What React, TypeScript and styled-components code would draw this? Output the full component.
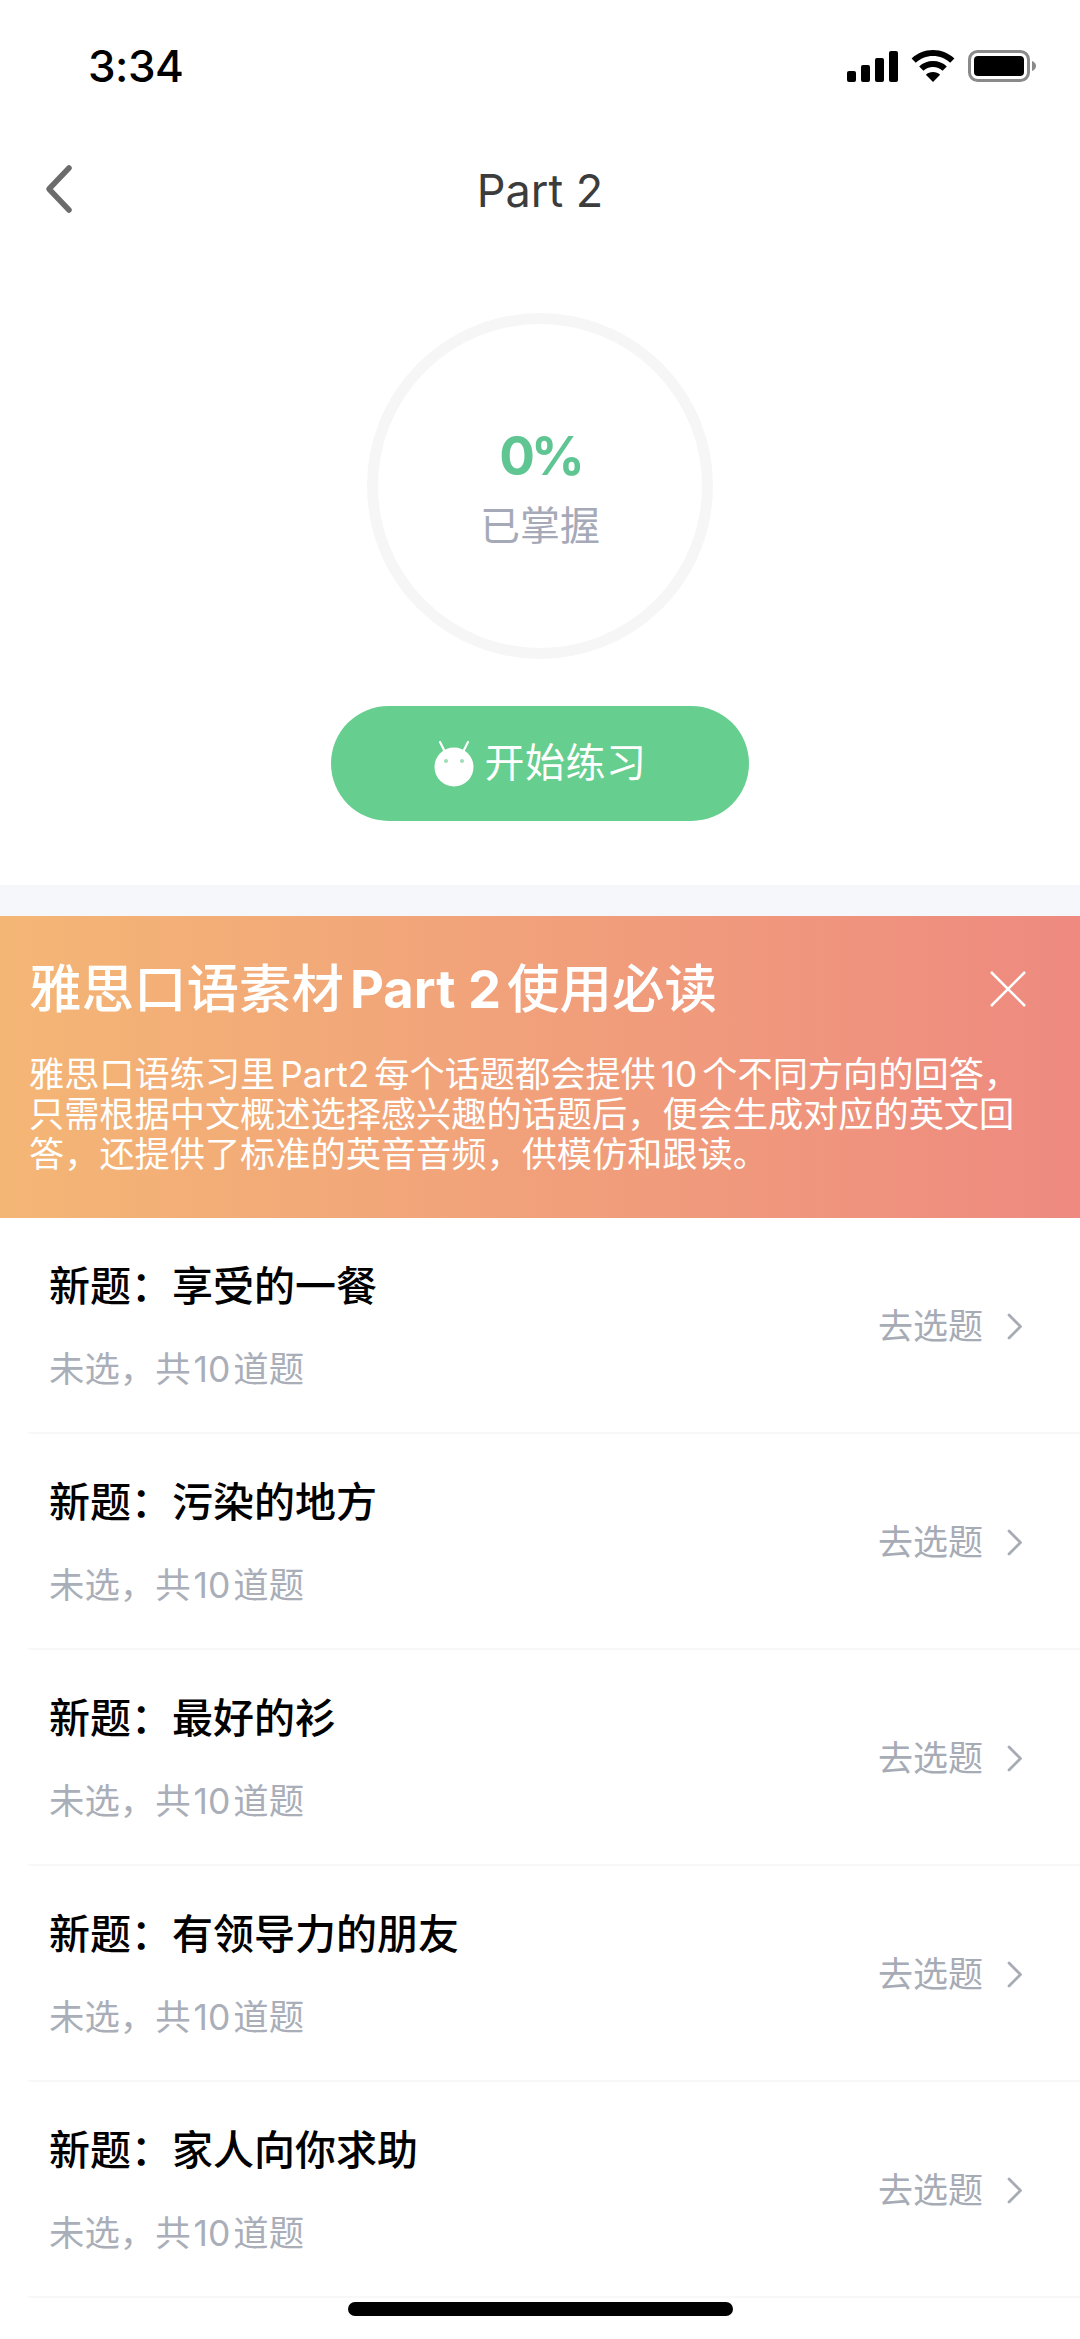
import React from "react";
import styled, { createGlobalStyle } from "styled-components";

const FONT = `Inter, "Noto Sans CJK SC", "Noto Sans", sans-serif`;
const COMMA = "\uFF0C";
const COLON = "\uFF1A";
const STOP = "\u3002";

const Global = createGlobalStyle`
  html, body { margin: 0; padding: 0; background: #fff; }
  * { box-sizing: border-box; }
`;

const Page = styled.div`
  position: relative;
  width: 1080px;
  height: 2339px;
  overflow: hidden;
  background: #fff;
  font-family: ${FONT};
  display: flex;
  flex-direction: column;
`;

const StatusBar = styled.div`
  height: 130px;
  padding: 40px 44px 0 88px;
  display: flex;
  justify-content: space-between;
  align-items: flex-start;
`;

const Time = styled.div`
  font-size: 44px;
  line-height: 52px;
  font-weight: 500;
  color: #000;
  letter-spacing: -0.5px;
`;

const StatusIcons = styled.div`
  display: flex;
  align-items: center;
  gap: 13px;
  height: 52px;
`;

const Nav = styled.div`
  position: relative;
  height: 122px;
  display: flex;
  align-items: center;
  justify-content: center;
`;

const BackButton = styled.div`
  position: absolute;
  left: 44px;
  top: 34px;
  width: 32px;
  height: 50px;
`;

const NavTitle = styled.div`
  font-size: 45px;
  line-height: 60px;
  color: #3c3c3c;
  font-weight: 400;
`;

const Hero = styled.div`
  padding-top: 61px;
  padding-bottom: 64px;
  display: flex;
  flex-direction: column;
  align-items: center;
  gap: 47px;
`;

const Ring = styled.div`
  width: 346px;
  height: 346px;
  border-radius: 50%;
  border: 11px solid #f6f6f7;
  display: flex;
  flex-direction: column;
  align-items: center;
  padding-top: 100px;
`;

const Percent = styled.div`
  font-size: 53px;
  line-height: 64px;
  font-weight: 700;
  letter-spacing: -4px;
  color: #5fc592;
`;

const Mastered = styled.div`
  font-size: 40px;
  line-height: 56px;
  color: #a6aab8;
  margin-top: 10px;
`;

const StartButton = styled.div`
  width: 418px;
  height: 115px;
  border-radius: 58px;
  background: #66ce8e;
  display: flex;
  align-items: center;
  justify-content: center;
  gap: 11px;
  color: #fff;
  font-size: 40px;
  line-height: 56px;
`;

const ButtonLabel = styled.span`
  position: relative;
  top: -1px;
  letter-spacing: 0.5px;
`;

const Band = styled.div`
  height: 31px;
  background: #f5f7fa;
`;

const Banner = styled.div`
  height: 302px;
  padding: 37px 54px 0 29px;
  background: linear-gradient(90deg, #f4b675 0%, #ee8a80 100%);
  color: #fff;
`;

const BannerHead = styled.div`
  display: flex;
  justify-content: space-between;
  align-items: center;
  height: 72px;
`;

const BannerTitle = styled.div`
  font-size: 52.5px;
  line-height: 72px;
  font-weight: 500;
  white-space: nowrap;
`;

const BannerLatin = styled.span`
  font-weight: 700;
  margin: 0 6px;
`;

const BannerBody = styled.div`
  margin-top: 29px;
  font-size: 35.2px;
  line-height: 40px;
  white-space: nowrap;
`;

const BodyLatin = styled.span`
  margin: 0 5px;
`;

const Row = styled.div`
  position: relative;
  height: 216px;
  padding: 0 57px 0 49px;
  display: flex;
  justify-content: space-between;
  align-items: center;
  &::after {
    content: "";
    position: absolute;
    left: 28px;
    right: 0;
    bottom: 0;
    height: 2px;
    background: #f8f8f9;
  }
`;

const RowText = styled.div`
  display: flex;
  flex-direction: column;
  gap: 32px;
`;

const RowTitle = styled.div`
  font-size: 41px;
  line-height: 56px;
  font-weight: 500;
  color: #000;
`;

const RowSub = styled.div`
  font-size: 35.4px;
  line-height: 48px;
  color: #a9aeb8;
`;

const Latin = styled.span`
  margin: 0 3px;
`;

const RowAction = styled.div`
  display: flex;
  align-items: center;
  gap: 24px;
  font-size: 35px;
  line-height: 48px;
  color: #a6abb6;
`;

const HomeBar = styled.div`
  position: absolute;
  left: 348px;
  bottom: 23px;
  width: 385px;
  height: 14px;
  border-radius: 7px;
  background: #000;
`;

const Signal = () => (
  <svg width="51" height="31" viewBox="0 0 51 31" fill="#000">
    <rect x="0" y="20" width="9" height="11" rx="2" />
    <rect x="14" y="14" width="9" height="17" rx="2" />
    <rect x="28" y="7" width="9" height="24" rx="2" />
    <rect x="42" y="0" width="9" height="31" rx="2" />
  </svg>
);

const Wifi = () => (
  <svg width="44" height="32" viewBox="0 0 44 32" fill="#000">
    <path d="M22 0C13.6 0 6.2 3.2 0.6 8.4l4.2 4.4C9.3 8.6 15.3 6 22 6s12.7 2.600 17.2 6.800l4.200-4.400C37.800 3.200 30.400 0 22 0z" />
    <path d="M22 11c-5.4 0-10.200 2-13.800 5.400l4.200 4.400C14.900 18.400 18.200 17 22 17s7.100 1.400 9.600 3.800l4.200-4.400C32.200 13 27.400 11 22 11z" />
    <path d="M22 22c-2.800 0-5.300 1-7.100 2.800L22 32l7.100-7.200C27.300 23 24.800 22 22 22z" />
  </svg>
);

const Battery = () => (
  <svg width="68" height="32" viewBox="0 0 68 32">
    <rect x="1.5" y="1.5" width="59" height="29" rx="8" fill="none" stroke="#8a8a8a" strokeWidth="3" />
    <rect x="6" y="6" width="50" height="20" rx="4" fill="#000" />
    <path d="M64 11c2.400.8 4 2.700 4 5s-1.600 4.200-4 5z" fill="#8a8a8a" />
  </svg>
);

const Chevron = styled.svg`
  display: block;
`;

const Robot = () => (
  <svg width="40" height="46" viewBox="0 0 40 46">
    <path d="M10 9L6 1M30 9l4-8" stroke="#fff" strokeWidth="2.200" strokeLinecap="round" />
    <circle cx="20" cy="26" r="19.500" fill="#fff" />
    <circle cx="12" cy="20" r="2" fill="#9fdcb8" />
    <circle cx="28" cy="20" r="2" fill="#9fdcb8" />
  </svg>
);

const topics = ["享受的一餐", "污染的地方", "最好的衫", "有领导力的朋友", "家人向你求助"];

export default function App() {
  return (
    <Page>
      <Global />
      <StatusBar>
        <Time>3:34</Time>
        <StatusIcons>
          <Signal />
          <Wifi />
          <Battery />
        </StatusIcons>
      </StatusBar>
      <Nav>
        <BackButton>
          <Chevron width="32" height="50" viewBox="0 0 32 50" fill="none">
            <path d="M25 4L5 25l20 21" stroke="#6b6b6b" strokeWidth="5.500" strokeLinecap="round" strokeLinejoin="round" />
          </Chevron>
        </BackButton>
        <NavTitle>Part 2</NavTitle>
      </Nav>
      <Hero>
        <Ring>
          <Percent>0%</Percent>
          <Mastered>已掌握</Mastered>
        </Ring>
        <StartButton>
          <Robot />
          <ButtonLabel>开始练习</ButtonLabel>
        </StartButton>
      </Hero>
      <Band />
      <Banner>
        <BannerHead>
          <BannerTitle>雅思口语素材<BannerLatin>Part 2</BannerLatin>使用必读</BannerTitle>
          <svg width="36" height="36" viewBox="0 0 36 36" fill="none">
            <path d="M1 1l34 34M35 1L1 35" stroke="#fff" strokeWidth="2.500" />
          </svg>
        </BannerHead>
        <BannerBody>
          雅思口语练习里<BodyLatin>Part2</BodyLatin>每个话题都会提供<BodyLatin>10</BodyLatin>个不同方向的回答{COMMA}
          <br />
          只需根据中文概述选择感兴趣的话题后{COMMA}便会生成对应的英文回
          <br />
          答{COMMA}还提供了标准的英音音频{COMMA}供模仿和跟读{STOP}
        </BannerBody>
      </Banner>
      {topics.map((t) => (
        <Row key={t}>
          <RowText>
            <RowTitle>新题{COLON}{t}</RowTitle>
            <RowSub>未选{COMMA}共<Latin>10</Latin>道题</RowSub>
          </RowText>
          <RowAction>
            去选题
            <Chevron width="16" height="27" viewBox="0 0 16 27" fill="none">
              <path d="M2 2l11.500 11.500L2 25" stroke="#a6abb6" strokeWidth="2.800" strokeLinecap="round" strokeLinejoin="round" />
            </Chevron>
          </RowAction>
        </Row>
      ))}
      <HomeBar />
    </Page>
  );
}
